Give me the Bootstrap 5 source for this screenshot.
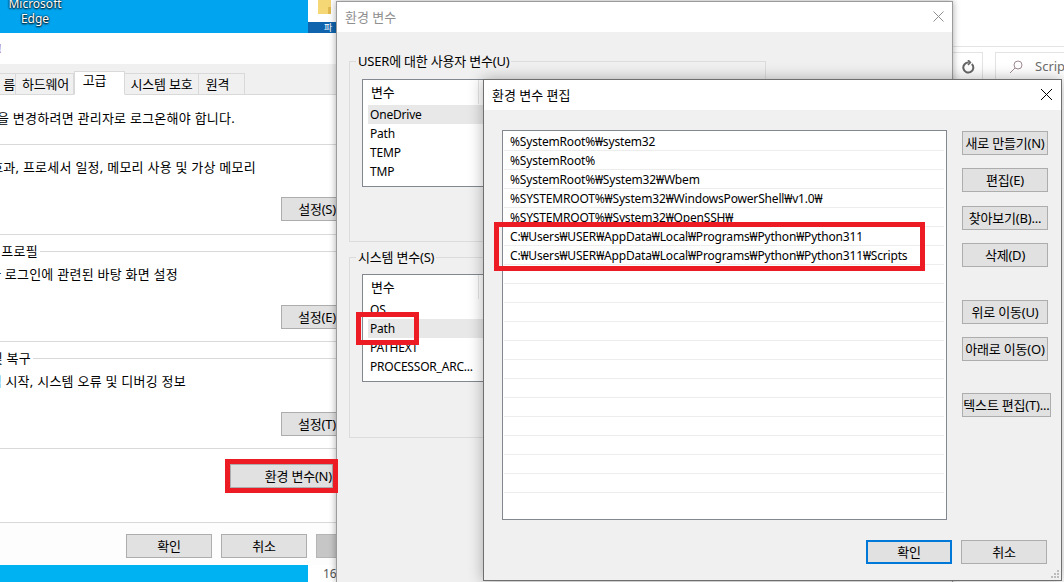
<!DOCTYPE html>
<html lang="ko">
<head>
<meta charset="utf-8">
<title>환경 변수 편집</title>
<link href="https://cdn.jsdelivr.net/npm/bootstrap@5.3.0/dist/css/bootstrap.min.css" rel="stylesheet">
<style>
html,body{height:100%;margin:0}
body{position:relative;width:1064px;height:582px;overflow:hidden;background:#fff;font-family:"Noto Sans","Noto Sans CJK KR",sans-serif;font-size:13px;letter-spacing:-.2px;line-height:19px;color:#000}
.desk-top{position:absolute;left:0;top:0;width:308px;height:33px;background:#00a4ef;color:#fff;text-align:center;font-size:12px;letter-spacing:0}
.desk-bottom{position:absolute;left:0;top:565px;width:308px;height:17px;background:#00b2f2}
.edge-label{width:70px;margin-top:-4px;line-height:15px;text-shadow:0 0 2px #000,0 1px 2px #000}
.back-win{position:absolute;left:308px;top:0;width:28px;height:33px;background:#fff;overflow:hidden}
.back-strip{position:absolute;left:308px;top:22px;width:28px;height:11px;background:#0f64ad;color:#fff;font-size:9px;line-height:12px;padding-left:16px;overflow:hidden}
.page-num{position:absolute;left:323px;top:565px;line-height:17px;color:#555;font-size:12px}
.explorer{position:absolute;left:953px;top:0;width:111px;height:80px;background:#fff}
.ex-line{height:47px;border-bottom:1px solid #e3e3e3}
.ex-tools{margin-top:5px;gap:12px}
.ex-box{height:28px;border:1px solid #e3e3e3;border-bottom:0}
.ex-refresh{width:30px;border-left:0}
.ex-search{flex:1;border-right:0;padding-left:13px;gap:12px;color:#6d6d6d;white-space:nowrap;overflow:hidden;letter-spacing:0}
.dlg{position:absolute;background:#f0f0f0;overflow:hidden}
.sys-dlg{left:0;top:33px;width:337px;height:532px;background:#fff}
.env-dlg{left:336px;top:1px;width:617px;height:581px;border:1px solid #9b9b9b;border-bottom:0;box-shadow:0 0 7px rgba(0,0,0,.35)}
.edit-dlg{left:483px;top:79px;width:579px;height:502px;border:1px solid #6f6f6f;box-shadow:0 0 14px rgba(0,0,0,.3)}
.tbar{height:30px;background:#fff;padding-left:8px;line-height:30px;letter-spacing:0}
.tbar-dim{color:#8f8f8f}
.sys-title{height:31px;text-align:left;color:#a33;line-height:30px;margin-left:-2px}
.tab-strip{height:31px;background:#f0f0f0;border-bottom:1px solid #d9d9d9;padding-top:8px;align-items:flex-end;flex-wrap:nowrap}
.tab-item{height:22px;margin-bottom:-1px;border:1px solid #d9d9d9;border-left:0;background:#f0f0f0;display:flex;align-items:center;justify-content:center;white-space:nowrap;line-height:19px;flex:none}
.tab-active{height:24px;background:#fff;border-left:1px solid #d9d9d9;border-bottom-color:#fff;position:relative;padding:0 10px 5px 0}
.tw-first{width:16px;justify-content:flex-end}
.tw-hw{width:58px;padding-left:2px}
.tw-adv{width:51px}
.tw-prot{width:74px}
.tw-rem{width:46px;padding-right:8px}
.sect{border-bottom:1px solid #d9d9d9;overflow:hidden}
.note-sect{height:50px;padding-top:14px}
.perf-sect{height:90px;padding-top:13px}
.prof-sect,.boot-sect{height:107px;padding-top:6px}
.env-sect{height:74px;padding-top:15px}
.foot-sect{height:43px;padding-top:11px;background:#fdfdfd;gap:9px;padding-left:126px}
.cut-text{display:flex;justify-content:flex-end;white-space:nowrap;letter-spacing:.25px}
.cut-235{width:235px}
.cut-256{width:256px}
.cut-178{width:178px}
.cut-186{width:186px}
.cut-38{width:38px;flex:none}
.cut-31{width:31px;flex:none}
.sect-head{height:20px}
.sect-rule{flex:1;height:1px;background:#d9d9d9;margin-left:2px}
.win-btn{height:24px;padding:0;border:1px solid #adadad;border-radius:0;background:#e1e1e1;color:#000;font-size:13px;letter-spacing:-.2px;line-height:21px;white-space:nowrap;--bs-btn-hover-bg:#e1e1e1}
.btn-set{width:59px;margin-left:281px;text-align:right;padding-right:3px;display:block}
.btn-sp1{margin-top:20px}
.btn-sp2{margin-top:21px}
.btn-envvar{width:103px;margin-left:230px;text-align:right;padding-right:0}
.btn-dlg{width:86px;flex:none}
.btn-shaded{background:#c6c6c6;border-color:#b5b5b5}
.btn-new{width:119px;height:28px;line-height:25px;flex:none}
.group-box{width:417px;border:1px solid #dcdcdc;padding:0 12px;min-width:0}
.grp-user{margin:20px 0 0 12px;height:190px}
.grp-system{margin:6px 0 0 12px;height:190px}
.group-box legend{float:none;width:auto;font-size:13px;margin:0 0 0 -6px;padding:0 2px;line-height:19px;white-space:nowrap}
.var-list{height:108px;margin-top:8px;border:1px solid #828790;background:#fff;overflow:hidden}
.grp-system .var-list{margin-top:7px}
.var-head{height:25px;padding-left:8px;line-height:24px}
.head-cell{width:108px;height:24px;border-right:1px solid #e5e5e5}
.var-row{margin-left:5px;height:19px;padding-left:2px;line-height:19px;white-space:nowrap;font-size:12px;letter-spacing:-.2px}
.var-selected{background:#e8e8e8}
.stack-btn{margin-top:15px}
.edit-body{padding:20px 0 0 18px;gap:15px}
.path-list{width:445px;height:390px;flex:none;border:1px solid #828790;background:#fff;border-radius:0;padding:1px 1px 0 1px;overflow:hidden;--bs-list-group-bg:transparent;--bs-list-group-border-color:#ededed}
.path-item{height:19px;padding:0 0 0 6px;line-height:20px;color:#000;white-space:nowrap;margin-right:1px;font-size:12px;letter-spacing:-.17px}
.side-col{width:92px;flex:none;padding-top:1px}
.side-col .win-btn{display:block;width:86px}
.m-13{margin-top:13px}
.m-14{margin-top:14px}
.m-33{margin-top:33px}
.m-32{margin-top:32px}
.side-col .btn-text{width:89px}
.edit-foot{position:absolute;right:14px;bottom:16px;gap:9px}
.btn-default{border:2px solid #0078d7;line-height:19px}
.closer{position:absolute;top:8px;width:13px;height:13px}
.grip{position:absolute;right:1px;bottom:1px}
.red-mark{position:absolute;border:5px solid #ed1c24;pointer-events:none}
.red-env{left:225px;top:459px;width:113px;height:34px}
.red-sys{left:356px;top:312px;width:63px;height:33px}
.red-path{left:494px;top:222px;width:431px;height:49px}
</style>
</head>
<body>
<div class="desk-top d-flex justify-content-start"><div class="edge-label">Microsoft Edge</div></div>
<div class="desk-bottom"></div>
<div class="back-win">
  <svg width="14" height="15" viewBox="0 0 14 15" style="margin:0 0 0 10px;display:block"><path d="M0 0h13v14H0z" fill="#f6d776"/><path d="M10 7h3v7h-3z" fill="#e2b94f"/></svg>
</div>
<div class="back-strip">파</div>
<div class="page-num">16</div>
<div class="explorer">
  <div class="ex-line"></div>
  <div class="d-flex ex-tools">
    <div class="ex-box ex-refresh d-flex align-items-center justify-content-center">
      <svg width="14" height="14" viewBox="0 0 14 14" fill="none" stroke="#666" stroke-width="2"><path d="M10.8 4a5 5 0 1 1-3-1.4"/><path d="M7 0l2.4 2.6L7 5" stroke-width="1.6"/></svg>
    </div>
    <div class="ex-box ex-search d-flex align-items-center">
      <svg width="14" height="14" viewBox="0 0 14 14" fill="none" stroke="#a08a94" style="flex:none"><circle cx="9" cy="5" r="4"/><path d="M6 8L1 13"/></svg>
      <span>Script</span>
    </div>
  </div>
</div>

<section class="dlg sys-dlg">
  <div class="sys-title">!</div>
  <div class="d-flex tab-strip">
    <div class="tab-item tw-first">름</div>
    <div class="tab-item tw-hw">하드웨어</div>
    <div class="tab-item tab-active tw-adv">고급</div>
    <div class="tab-item tw-prot">시스템 보호</div>
    <div class="tab-item tw-rem">원격</div>
  </div>
  <div class="sect note-sect"><div class="cut-text cut-235">이 내용의 대부분을 변경하려면 관리자로 로그온해야 합니다.</div></div>
  <div class="sect perf-sect">
    <div class="cut-text cut-256">시각 효과, 프로세서 일정, 메모리 사용 및 가상 메모리</div>
    <button class="btn win-btn btn-set btn-sp1">설정(S)</button>
  </div>
  <div class="sect prof-sect">
    <div class="sect-head d-flex align-items-center"><div class="cut-text cut-38">사용자 프로필</div><div class="sect-rule"></div></div>
    <div class="cut-text cut-178 mt-1">사용자 로그인에 관련된 바탕 화면 설정</div>
    <button class="btn win-btn btn-set btn-sp2">설정(E)</button>
  </div>
  <div class="sect boot-sect">
    <div class="sect-head d-flex align-items-center"><div class="cut-text cut-31">시작 및 복구</div><div class="sect-rule"></div></div>
    <div class="cut-text cut-186 mt-1">시스템 시작, 시스템 오류 및 디버깅 정보</div>
    <button class="btn win-btn btn-set btn-sp2">설정(T)</button>
  </div>
  <div class="sect env-sect"><button class="btn win-btn btn-envvar">환경 변수(N)</button></div>
  <div class="foot-sect d-flex">
    <button class="btn win-btn btn-dlg">확인</button>
    <button class="btn win-btn btn-dlg">취소</button>
    <button class="btn win-btn btn-dlg btn-shaded">적용</button>
  </div>
</section>

<section class="dlg env-dlg">
  <div class="tbar tbar-dim">환경 변수</div>
  <svg class="closer" style="left:595px" viewBox="0 0 13 13" stroke="#8f8f8f" fill="none"><path d="M1.5 1.5l10 10M11.5 1.5l-10 10"/></svg>
  <fieldset class="group-box grp-user">
    <legend>USER에 대한 사용자 변수(U)</legend>
    <div class="var-list">
      <div class="var-head d-flex"><div class="head-cell">변수</div></div>
      <div class="var-row var-selected">OneDrive</div>
      <div class="var-row">Path</div>
      <div class="var-row">TEMP</div>
      <div class="var-row">TMP</div>
    </div>
    <div class="stack-btn text-end"><button class="btn win-btn btn-new me-5">새로 만들기(N)</button></div>
  </fieldset>
  <fieldset class="group-box grp-system">
    <legend>시스템 변수(S)</legend>
    <div class="var-list">
      <div class="var-head d-flex"><div class="head-cell">변수</div></div>
      <div class="var-row">OS</div>
      <div class="var-row var-selected">Path</div>
      <div class="var-row">PATHEXT</div>
      <div class="var-row">PROCESSOR_ARC...</div>
    </div>
    <div class="stack-btn text-end"><button class="btn win-btn btn-new me-5">새로 만들기(N)</button></div>
  </fieldset>
</section>

<section class="dlg edit-dlg">
  <div class="tbar">환경 변수 편집</div>
  <svg class="closer" style="left:556px" viewBox="0 0 13 13" stroke="#000" fill="none"><path d="M1 1l11 11M12 1L1 12"/></svg>
  <div class="d-flex edit-body">
    <div class="list-group list-group-flush path-list">
      <div class="list-group-item path-item">%SystemRoot%₩system32</div>
      <div class="list-group-item path-item">%SystemRoot%</div>
      <div class="list-group-item path-item">%SystemRoot%₩System32₩Wbem</div>
      <div class="list-group-item path-item">%SYSTEMROOT%₩System32₩WindowsPowerShell₩v1.0₩</div>
      <div class="list-group-item path-item">%SYSTEMROOT%₩System32₩OpenSSH₩</div>
      <div class="list-group-item path-item">C:₩Users₩USER₩AppData₩Local₩Programs₩Python₩Python311</div>
      <div class="list-group-item path-item">C:₩Users₩USER₩AppData₩Local₩Programs₩Python₩Python311₩Scripts</div>
      <div class="list-group-item path-item"></div><div class="list-group-item path-item"></div>
      <div class="list-group-item path-item"></div><div class="list-group-item path-item"></div>
      <div class="list-group-item path-item"></div><div class="list-group-item path-item"></div>
      <div class="list-group-item path-item"></div><div class="list-group-item path-item"></div>
      <div class="list-group-item path-item"></div><div class="list-group-item path-item"></div>
      <div class="list-group-item path-item"></div><div class="list-group-item path-item"></div>
      <div class="list-group-item path-item"></div>
    </div>
    <div class="side-col">
      <button class="btn win-btn">새로 만들기(N)</button>
      <button class="btn win-btn m-13">편집(E)</button>
      <button class="btn win-btn m-14">찾아보기(B)...</button>
      <button class="btn win-btn m-13">삭제(D)</button>
      <button class="btn win-btn m-33">위로 이동(U)</button>
      <button class="btn win-btn m-13">아래로 이동(O)</button>
      <button class="btn win-btn btn-text m-32">텍스트 편집(T)...</button>
    </div>
  </div>
  <div class="edit-foot d-flex">
    <button class="btn win-btn btn-dlg btn-default">확인</button>
    <button class="btn win-btn btn-dlg">취소</button>
  </div>
  <svg class="grip" width="10" height="10" viewBox="0 0 10 10" fill="#bdbdbd"><path d="M7 1h2v2H7zM4 4h2v2H4zM7 4h2v2H7zM1 7h2v2H1zM4 7h2v2H4zM7 7h2v2H7z"/></svg>
</section>

<div class="red-mark red-env"></div>
<div class="red-mark red-sys"></div>
<div class="red-mark red-path"></div>
<script src="https://cdn.jsdelivr.net/npm/bootstrap@5.3.0/dist/js/bootstrap.bundle.min.js"></script>
</body>
</html>
